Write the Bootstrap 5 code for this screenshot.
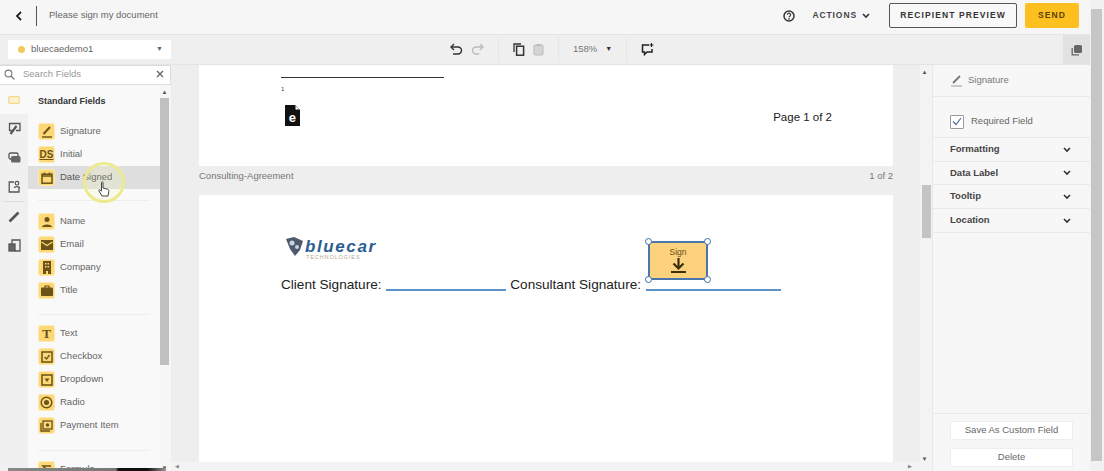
<!DOCTYPE html>
<html lang="en"><head><meta charset="utf-8"><title>Sign</title>
<link href="https://cdn.jsdelivr.net/npm/bootstrap@5.3.0/dist/css/bootstrap.min.css" rel="stylesheet">
<style>
html,body{height:471px;overflow:hidden;margin:0}
body{font-family:"Liberation Sans",Arial,sans-serif;background:#f4f4f4;color:#555;width:1104px;position:relative}
.app-shell{width:1090px;height:471px}
.top-bar{height:34px;background:#f6f6f6;padding-left:15px;padding-right:11px;padding-bottom:3px}
.back-btn{width:10px;color:#222}
.top-sep{width:1px;height:20px;background:#555;margin:0 12px 0 11px}
.doc-title{font-size:9.5px;color:#666}
.act-label{font-size:8.5px;font-weight:700;letter-spacing:.9px;color:#444}
.act-chev{margin-left:5px}
.help-ic{margin-right:17px}
.btn-preview{width:128px;height:25px;margin-left:19px;border:1px solid #555;border-radius:2px;background:#f8f8f8;font-size:8.5px;font-weight:700;letter-spacing:1.1px;color:#333;padding:0}
.btn-send{width:54px;height:25px;background:#fec01f;border:0;border-radius:2px;font-size:8.5px;font-weight:700;letter-spacing:1.1px;color:#5a4308;padding:0;margin-left:8px}
.tool-bar{height:31px;background:#efefef;border-top:1px solid #e6e6e6;border-bottom:1px solid #e4e4e4}
.signer-select{width:163px;height:19px;margin-left:8px;background:#fff;padding:0 8px 0 10px;font-size:9.5px;color:#666}
.signer-dot{width:7px;height:7px;border-radius:50%;background:#f4c95b;margin-right:6px}
.tri-sm{font-size:7px;color:#666}
.tri-dark{font-size:7px;color:#333}
.tools-wrap{margin-left:265px}
.tool-group{height:26px;border-right:1px solid #e6e6e6;padding:0 14px}
.tool-last{padding-left:14px}
.zoom-label{font-size:9.5px;color:#777}
.copy-tab{width:27px;height:29px;background:#e2e2e2}
.work-row{height:406px}
.side-col{width:171px;background:#f9f9f9}
.search-row{height:20px;background:#fff;border:1px solid #ddd;border-left:0;padding:0 6px 2px 4px;font-size:9.5px;color:#999}
.list-row{height:386px}
.icon-rail{width:28px;background:#f0f0f0}
.rail-top{height:29px;background:#f9f9f9}
.rail-btn{height:29px;color:#555}
.rail-rule{height:1px;background:#ddd;margin:0 3px}
.field-list{width:132px;padding-top:10px;overflow:hidden}
.field-head{font-size:9px;font-weight:700;color:#333;margin:0 0 13px 10px;line-height:12px}
.field-row{height:23px;padding-left:11px;font-size:9.5px;color:#666;gap:6px}
.field-on{background:#dedede;color:#555}
.field-tile{width:15px;height:15px;background:#fcd877;border-radius:2px;color:#6a5218;flex:none;box-shadow:0 0 0 1px #fde9b2}
.tile-ds{font-size:10px;font-weight:700;text-decoration:underline}
.tile-t{font-family:"Liberation Serif",serif;font-weight:700;font-size:13px}
.field-rule{height:1px;background:#eee;margin:11px 10px 9px 10px}
.field-rule-b{margin:12px 10px 7px 10px}
.field-rule-c{margin:13px 10px 7px 10px}
.v-bar{width:11px;background:#f6f6f6;position:relative}
.v-thumb{width:9px;height:267px;background:#c0c0c0;margin-top:3px}
.sb-arrow{font-size:6px;line-height:6px;text-align:center;color:#555;width:9px}
.doc-col{width:761px;background:#eeeeee}
.doc-main{min-height:0}
.doc-scroll{width:749px;padding-left:28px;overflow:hidden}
.sheet-one{width:694px;height:101px;background:#fff;padding:12px 61px 0 82px}
.sheet-rule{width:163px;height:1px;background:#333}
.sheet-num{font-size:6px;color:#444;margin:7px 0 12px 0;line-height:8px}
.e-glyph{font-family:"Liberation Sans",sans-serif;font-weight:700;font-size:13px;fill:#fff}
.e-doc{margin-left:4px}
.page-note{font-size:11.5px;color:#222;line-height:14px;margin-top:5px}
.band{width:694px;height:29px;padding-top:4px;font-size:9.5px;color:#777;line-height:12px}
.sheet-two{width:694px;height:267px;background:#fff;padding:42px 0 0 82px;position:relative}
.brand-mark{margin:0 1px 0 4px}
.brand-text{padding-top:3px}
.brand-word{font-style:italic;font-weight:700;font-size:17px;color:#2c5c93;line-height:13px;letter-spacing:1.6px}
.brand-sub{font-size:5.5px;letter-spacing:.9px;color:#b8a98c;line-height:6px;margin-top:1px;padding-left:1px}
.sig-line{font-size:13.6px;color:#222;line-height:16px;margin-top:17px;white-space:nowrap}
.sig-blank{display:inline-block;height:2px;background:#5b93c6;vertical-align:-2px;margin:0 4px 0 1px}
.blank-a{width:120px}
.blank-b{width:135px}
.sign-tag{position:absolute;left:449px;top:46px;width:60px;height:39px;background:#fdd27d;border:2.5px solid #4a76aa;border-radius:2px;text-align:center;font-size:8.5px;color:#6b4d10;line-height:10px;padding-top:4px}
.grip{position:absolute;width:7px;height:7px;border:1.2px solid #3f6ea6;background:#fff;border-radius:50%}
.g-tl{left:-5px;top:-5px}.g-tr{right:-5px;top:-5px}.g-bl{left:-5px;bottom:-5px}.g-br{right:-5px;bottom:-5px}
.doc-vbar{width:12px;background:#f3f3f3;position:relative}
.doc-thumb{position:absolute;left:2px;top:120px;width:9px;height:53px;background:#c4c4c4}
.h-bar{height:9px;background:#f3f3f3;font-size:5px;color:#888}
.prop-col{width:158px;background:#f7f7f7;border-left:1px solid #e8e8e8}
.prop-head{height:32px;padding-left:17px;font-size:9.5px;color:#777;border-bottom:1px solid #eaeaea;gap:5px}
.req-row{height:41px;padding:9px 0 0 17px;font-size:9.5px;color:#666;gap:7px;border-bottom:1px solid #eaeaea}
.req-box{width:14px;height:14px;border:1px solid #999;background:#fff;border-radius:1px}
.acc-row{height:24px;padding:0 19px 0 17px;font-size:9.5px;font-weight:700;color:#444;border-bottom:1px solid #eaeaea}
.acc-tight{height:23px}
.prop-foot{border-top:1px solid #eaeaea;padding:7px 17px 0 17px;gap:8px;height:58px}
.foot-btn{height:19px;width:123px;background:#fff;border:1px solid #eee;border-radius:1px;font-size:9.5px;color:#666;padding:0}
.page-scroll{width:14px;height:471px;background:#f1f1f1;right:0;top:0}
.page-thumb{width:11px;height:452px;background:#c6c6c6;margin:9px 0 0 1px}
.mark-ring{position:absolute;left:83px;top:162px;width:42px;height:41px;border-radius:50%;border:3px solid #ecea8e;background:rgba(245,243,170,.18);pointer-events:none}
.hand{position:absolute;left:98px;top:181px;pointer-events:none}
.video-strip{position:absolute;left:8px;bottom:0;width:158px;height:3px;background:linear-gradient(90deg,#888 0,#777 68%,#111 70%,#111 88%,#999 100%)}
</style></head>
<body>
<div class="app-shell d-flex flex-column">
 <header class="top-bar d-flex align-items-center">
  <div class="back-btn d-flex"><svg width="8" height="10" viewBox="0 0 8 10"><path d="M6 1 2 5l4 4" fill="none" stroke="#222" stroke-width="1.800"/></svg></div>
  <div class="top-sep"></div>
  <span class="doc-title">Please sign my document</span>
  <div class="ms-auto d-flex align-items-center">
   <svg class="help-ic" width="12" height="12" viewBox="0 0 12 12"><circle cx="6" cy="6" r="5" fill="none" stroke="#333" stroke-width="1.500"/><path d="M4.400 4.800a1.600 1.600 0 1 1 2.400 1.400c-.6.3-.8.6-.8 1.100" fill="none" stroke="#333" stroke-width="1.200"/><circle cx="6" cy="8.900" r=".8" fill="#333"/></svg>
   <span class="act-label">ACTIONS</span>
   <svg class="act-chev" width="8" height="6" viewBox="0 0 8 6"><path d="M1 1l3 3 3-3" fill="none" stroke="#333" stroke-width="1.600"/></svg>
   <button class="btn-preview">RECIPIENT PREVIEW</button>
   <button class="btn-send">SEND</button>
  </div>
 </header>
 <div class="tool-bar d-flex align-items-center">
  <div class="signer-select d-flex align-items-center"><span class="signer-dot"></span>bluecaedemo1<span class="ms-auto tri-sm">▼</span></div>
  <div class="tools-wrap d-flex align-items-center">
   <div class="tool-group d-flex align-items-center gap-2">
    <svg width="13" height="13" viewBox="0 0 13 13"><path d="M4 1 1 4l3 3" fill="none" stroke="#333" stroke-width="1.400"/><path d="M1.500 4H8a3.500 3.500 0 0 1 0 7H3" fill="none" stroke="#333" stroke-width="1.400"/></svg>
    <svg width="13" height="13" viewBox="0 0 13 13"><path d="M9 1l3 3-3 3" fill="none" stroke="#bbb" stroke-width="1.300"/><path d="M11 4H5a3.500 3.500 0 0 0 0 7h3" fill="none" stroke="#bbb" stroke-width="1.300"/></svg>
   </div>
   <div class="tool-group d-flex align-items-center gap-2">
    <svg width="12" height="13" viewBox="0 0 12 13"><path d="M8 1H1v8" fill="none" stroke="#333" stroke-width="1.300"/><rect x="3.600" y="3.200" width="7" height="9" fill="none" stroke="#333" stroke-width="1.500"/></svg>
    <svg width="11" height="13" viewBox="0 0 11 13"><rect x="1" y="2" width="9" height="10" rx="1" fill="#d4d4d4" stroke="#bbb"/><rect x="3.500" y="1" width="4" height="2" fill="#bbb"/></svg>
   </div>
   <div class="tool-group d-flex align-items-center zoom-label gap-2">158%<span class="tri-dark">▼</span></div>
   <div class="tool-last d-flex align-items-center"><svg width="13" height="13" viewBox="0 0 13 13"><path d="M8 2H1.500v7h2v2.500L6 9h5V6" fill="none" stroke="#222" stroke-width="1.500"/><path d="M10.500 0v4M8.500 2h4" stroke="#222" stroke-width="1.200"/></svg></div>
  </div>
  <div class="copy-tab ms-auto d-flex align-items-center justify-content-center"><svg width="12" height="12" viewBox="0 0 12 12"><rect x="3" y="1" width="8" height="8" rx="1.500" fill="#666"/><path d="M1.200 4v6.800H8" fill="none" stroke="#666" stroke-width="1.300"/></svg></div>
 </div>
 <div class="work-row d-flex">
  <aside class="side-col d-flex flex-column">
   <div class="search-row d-flex align-items-center">
    <svg width="11" height="11" viewBox="0 0 11 11" class="me-1"><circle cx="4.500" cy="4.500" r="3.400" fill="none" stroke="#777" stroke-width="1.100"/><path d="M7 7l3.400 3.400" stroke="#777" stroke-width="1.300"/></svg>
    <span class="ms-1">Search Fields</span>
    <svg width="8" height="8" viewBox="0 0 8 8" class="ms-auto"><path d="M1 1l6 6M7 1 1 7" stroke="#666" stroke-width="1.400"/></svg>
   </div>
   <div class="list-row d-flex">
    <nav class="icon-rail">
     <div class="rail-top d-flex align-items-center justify-content-center"><svg width="12" height="8" viewBox="0 0 12 8"><rect x=".7" y=".7" width="10.600" height="6.600" rx="1" fill="#fdf2cf" stroke="#f2d98c" stroke-width="1.200"/></svg></div>
     <div class="rail-btn d-flex align-items-center justify-content-center"><svg width="13" height="13" viewBox="0 0 13 13"><path d="M4 8.500H1.500V1.500h10.500v7H8" fill="none" stroke="#555" stroke-width="1.300"/><path d="M2.500 12 8.500 4" stroke="#555" stroke-width="2.200"/></svg></div>
     <div class="rail-btn d-flex align-items-center justify-content-center"><svg width="13" height="11" viewBox="0 0 13 11"><rect x="1" y="1" width="9" height="6" rx="1.500" fill="none" stroke="#555" stroke-width="1.300"/><rect x="3" y="4" width="9.500" height="6.500" rx="1.500" fill="#666"/></svg></div>
     <div class="rail-btn d-flex align-items-center justify-content-center"><svg width="13" height="13" viewBox="0 0 13 13"><path d="M6 2H1.200v10H11V7.500" fill="none" stroke="#555" stroke-width="1.300"/><circle cx="9" cy="3.200" r="1.800" fill="none" stroke="#555" stroke-width="1.200"/><path d="M6.500 8c0-1.800 5-1.800 5 0" fill="none" stroke="#555" stroke-width="1.200"/></svg></div>
     <div class="rail-rule"></div>
     <div class="rail-btn d-flex align-items-center justify-content-center"><svg width="13" height="13" viewBox="0 0 13 13"><path d="M1.500 11.500 10.500 2.500" stroke="#555" stroke-width="2.600"/></svg></div>
     <div class="rail-btn d-flex align-items-center justify-content-center"><svg width="13" height="13" viewBox="0 0 13 13"><rect x="1" y="5" width="6" height="7" fill="#666" stroke="#555" stroke-width="1.300"/><path d="M4 5V1h8v11H7" fill="none" stroke="#555" stroke-width="1.300"/></svg></div>
    </nav>
    <div class="field-list">
     <div class="field-head">Standard Fields</div>
     <div class="field-row d-flex align-items-center"><span class="field-tile d-flex align-items-center justify-content-center"><svg width="12" height="12" viewBox="0 0 12 12"><path d="M2.500 8l6.500-7" stroke="#6a5218" stroke-width="2"/><path d="M1 11h10" stroke="#6a5218" stroke-width="1.400"/></svg></span>Signature</div>
     <div class="field-row d-flex align-items-center"><span class="field-tile tile-ds d-flex align-items-center justify-content-center">DS</span>Initial</div>
     <div class="field-row field-on d-flex align-items-center"><span class="field-tile d-flex align-items-center justify-content-center"><svg width="12" height="12" viewBox="0 0 12 12"><rect x="1" y="2.200" width="10" height="9" fill="none" stroke="#6a5218" stroke-width="1.500"/><path d="M1 4h10M3.500 .5v2M8.500 .5v2" stroke="#6a5218" stroke-width="1.500"/></svg></span>Date Signed</div>
     <div class="field-rule"></div>
     <div class="field-row d-flex align-items-center"><span class="field-tile d-flex align-items-center justify-content-center"><svg width="12" height="12" viewBox="0 0 12 12"><circle cx="6" cy="3.500" r="2.500" fill="#6a5218"/><path d="M1 11c0-3.500 10-3.500 10 0z" fill="#6a5218"/></svg></span>Name</div>
     <div class="field-row d-flex align-items-center"><span class="field-tile d-flex align-items-center justify-content-center"><svg width="12" height="10" viewBox="0 0 12 10"><rect width="12" height="10" fill="#6a5218"/><path d="M.5 2 6 5.500 11.500 2" fill="none" stroke="#fcd877" stroke-width="1.300"/></svg></span>Email</div>
     <div class="field-row d-flex align-items-center"><span class="field-tile d-flex align-items-center justify-content-center"><svg width="10" height="13" viewBox="0 0 10 13"><path d="M1 0h8v13H6v-3H4v3H1z" fill="#6a5218"/><path d="M3 2h1.500v1.500H3zM5.500 2H7v1.500H5.500zM3 5h1.500v1.500H3zM5.500 5H7v1.500H5.500z" fill="#fcd877"/></svg></span>Company</div>
     <div class="field-row d-flex align-items-center"><span class="field-tile d-flex align-items-center justify-content-center"><svg width="12" height="11" viewBox="0 0 12 11"><rect y="2.500" width="12" height="8.500" rx="1" fill="#6a5218"/><path d="M4 3V1h4v2" fill="none" stroke="#6a5218" stroke-width="1.200"/></svg></span>Title</div>
     <div class="field-rule field-rule-b"></div>
     <div class="field-row d-flex align-items-center"><span class="field-tile tile-t d-flex align-items-center justify-content-center">T</span>Text</div>
     <div class="field-row d-flex align-items-center"><span class="field-tile d-flex align-items-center justify-content-center"><svg width="12" height="12" viewBox="0 0 12 12"><rect x="1" y="1" width="10" height="10" fill="none" stroke="#6a5218" stroke-width="1.500"/><path d="M3.500 6l2 2 3-4" fill="none" stroke="#6a5218" stroke-width="1.300"/></svg></span>Checkbox</div>
     <div class="field-row d-flex align-items-center"><span class="field-tile d-flex align-items-center justify-content-center"><svg width="12" height="12" viewBox="0 0 12 12"><rect x="1" y="1" width="10" height="10" fill="none" stroke="#6a5218" stroke-width="1.500"/><path d="M3.500 4.500h5L6 8z" fill="#6a5218"/></svg></span>Dropdown</div>
     <div class="field-row d-flex align-items-center"><span class="field-tile d-flex align-items-center justify-content-center"><svg width="13" height="13" viewBox="0 0 13 13"><circle cx="6.500" cy="6.500" r="5.300" fill="none" stroke="#6a5218" stroke-width="1.400"/><circle cx="6.500" cy="6.500" r="2.500" fill="#6a5218"/></svg></span>Radio</div>
     <div class="field-row d-flex align-items-center"><span class="field-tile d-flex align-items-center justify-content-center"><svg width="13" height="12" viewBox="0 0 13 12"><path d="M1 3v8h9" fill="none" stroke="#6a5218" stroke-width="1.300"/><rect x="3" y="1" width="9" height="8" fill="none" stroke="#6a5218" stroke-width="1.300"/><circle cx="7.500" cy="5" r="1.700" fill="#6a5218"/></svg></span>Payment Item</div>
     <div class="field-rule field-rule-c"></div>
     <div class="field-row d-flex align-items-center"><span class="field-tile d-flex align-items-center justify-content-center"><svg width="12" height="12" viewBox="0 0 12 12"><path d="M10 2H2l4 4-4 4h8" fill="none" stroke="#6a5218" stroke-width="1.500"/></svg></span>Formula</div>
    </div>
    <div class="v-bar"><div class="sb-arrow pt-1">▲</div><div class="v-thumb"></div><div class="sb-arrow position-absolute bottom-0">▼</div></div>
   </div>
  </aside>
  <main class="doc-col d-flex flex-column">
   <div class="doc-main d-flex flex-grow-1">
    <div class="doc-scroll">
     <section class="sheet-one">
      <div class="sheet-rule"></div>
      <div class="sheet-num">1</div>
      <div class="d-flex justify-content-between">
       <svg class="e-doc" width="15" height="21" viewBox="0 0 15 21"><path d="M0 0h10l5 5v16H0z" fill="#111"/><path d="M10.500 .8 14.200 4.500h-3.700z" fill="#fff"/><text class="e-glyph" x="3.800" y="17">e</text></svg>
       <span class="page-note">Page 1 of 2</span>
      </div>
     </section>
     <div class="band d-flex justify-content-between"><span>Consulting-Agreement</span><span>1 of 2</span></div>
     <section class="sheet-two">
      <div class="d-flex align-items-start">
       <svg class="brand-mark" width="19" height="21" viewBox="0 0 19 21"><path d="M1 2 9 0l9 4-3 9-5 6-5-7z" fill="#4c5a6c"/><circle cx="7" cy="6" r="2.500" fill="#c9d3df"/><circle cx="12" cy="10" r="2" fill="#c9d3df"/></svg>
       <div class="brand-text"><div class="brand-word">bluecar</div><div class="brand-sub">TECHNOLOGIES</div></div>
      </div>
      <div class="sig-line">Client Signature: <span class="sig-blank blank-a"></span>Consultant Signature: <span class="sig-blank blank-b"></span></div>
      <div class="sign-tag">Sign<br>
       <svg width="17" height="17" viewBox="0 0 17 17" class="d-block mx-auto"><path d="M8.500 1v9" stroke="#3d2e0c" stroke-width="2.200"/><path d="M3.500 6.500l5 5 5-5" fill="none" stroke="#3d2e0c" stroke-width="2.200"/><path d="M1 15h15" stroke="#3d2e0c" stroke-width="2"/></svg>
       <span class="grip g-tl"></span><span class="grip g-tr"></span><span class="grip g-bl"></span><span class="grip g-br"></span>
      </div>
     </section>
    </div>
    <div class="doc-vbar"><div class="sb-arrow pt-1">▲</div><div class="doc-thumb"></div><div class="sb-arrow position-absolute bottom-0">▼</div></div>
   </div>
   <div class="h-bar d-flex align-items-center justify-content-between px-1"><span>◀</span><span class="me-3">▶</span></div>
  </main>
  <aside class="prop-col d-flex flex-column">
   <div class="prop-head d-flex align-items-center"><svg width="13" height="12" viewBox="0 0 13 12"><path d="M3 8l7-7" stroke="#777" stroke-width="1.800"/><path d="M1 11h11" stroke="#aaa" stroke-width="1.200"/></svg>Signature</div>
   <div class="req-row d-flex align-items-center"><span class="req-box d-flex align-items-center justify-content-center"><svg width="10" height="9" viewBox="0 0 10 9"><path d="M1 4.500 4 7.500 9 1" fill="none" stroke="#4c6f9e" stroke-width="1.200"/></svg></span>Required Field</div>
   <div class="acc-row d-flex align-items-center justify-content-between">Formatting<svg width="8" height="6" viewBox="0 0 8 6"><path d="M1 1l3 3 3-3" fill="none" stroke="#333" stroke-width="1.600"/></svg></div>
   <div class="acc-row acc-tight d-flex align-items-center justify-content-between">Data Label<svg width="8" height="6" viewBox="0 0 8 6"><path d="M1 1l3 3 3-3" fill="none" stroke="#333" stroke-width="1.600"/></svg></div>
   <div class="acc-row d-flex align-items-center justify-content-between">Tooltip<svg width="8" height="6" viewBox="0 0 8 6"><path d="M1 1l3 3 3-3" fill="none" stroke="#333" stroke-width="1.600"/></svg></div>
   <div class="acc-row d-flex align-items-center justify-content-between">Location<svg width="8" height="6" viewBox="0 0 8 6"><path d="M1 1l3 3 3-3" fill="none" stroke="#333" stroke-width="1.600"/></svg></div>
   <div class="prop-foot mt-auto d-flex flex-column">
    <button class="foot-btn">Save As Custom Field</button>
    <button class="foot-btn">Delete</button>
   </div>
  </aside>
 </div>
</div>
<div class="page-scroll position-absolute"><div class="page-thumb"></div></div>
<div class="mark-ring"></div>
<svg class="hand" width="12" height="16" viewBox="0 0 12 16"><path d="M3.500 1.500c0-1 1.500-1 1.500 0V7l4 1c1.500.5 1.800 1 1.800 2.500L10 15H4L1 10c-.5-1 .8-1.800 1.500-.8l1 1z" fill="#fff" stroke="#444" stroke-width="1"/></svg>
<div class="video-strip"></div>
<script src="https://cdn.jsdelivr.net/npm/bootstrap@5.3.0/dist/js/bootstrap.bundle.min.js"></script>
</body></html>
